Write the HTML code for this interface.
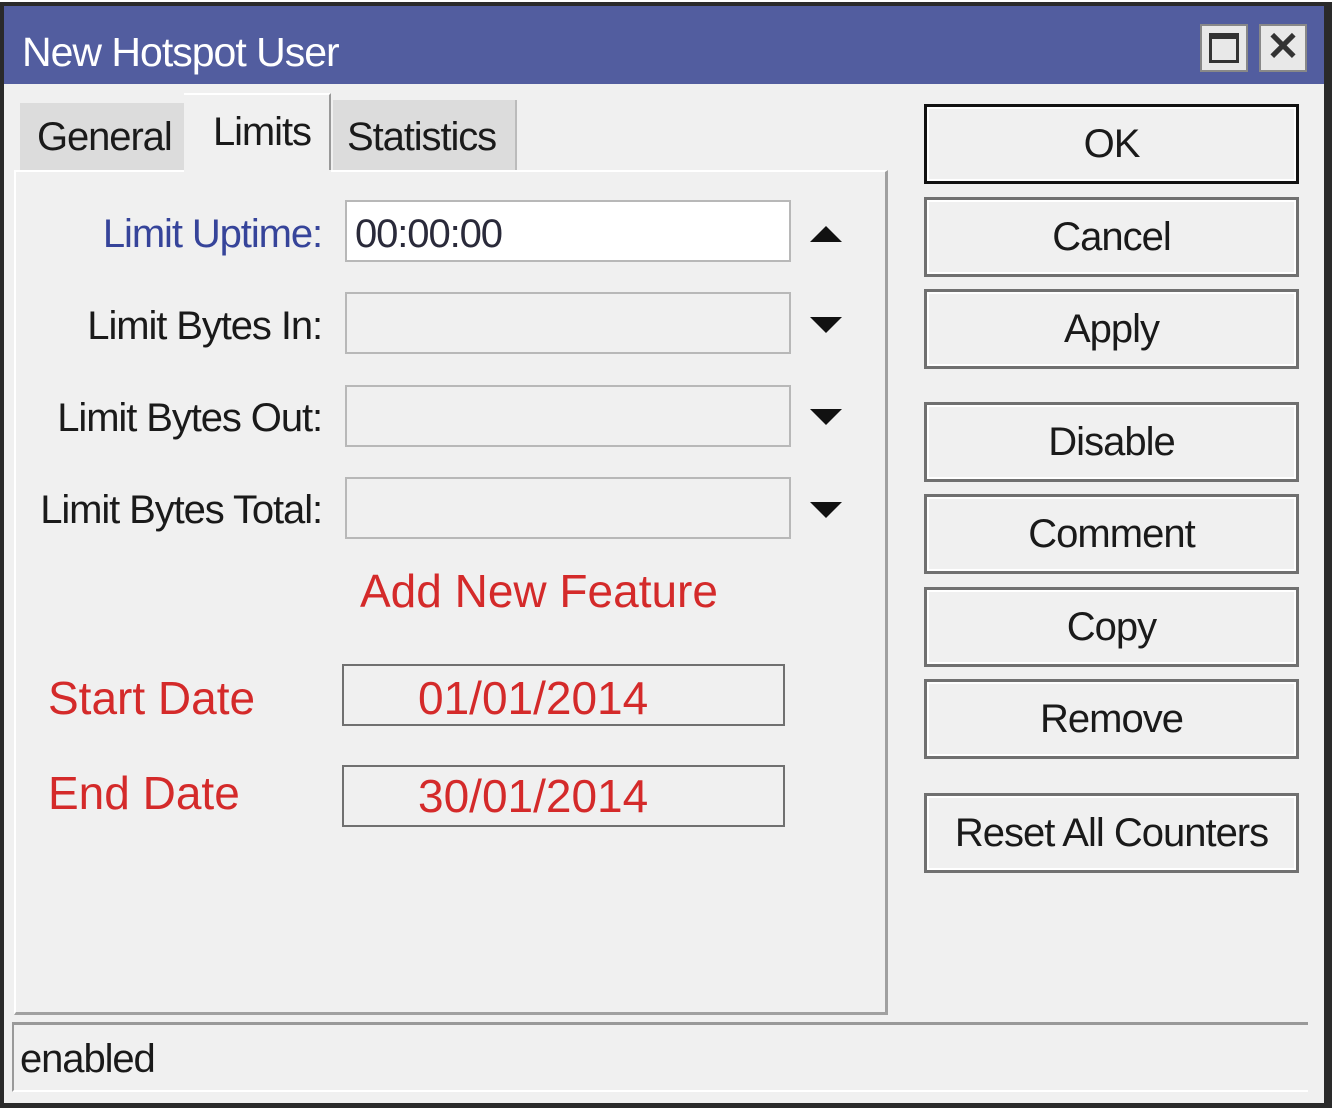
<!DOCTYPE html>
<html><head><meta charset="utf-8"><style>
*{margin:0;padding:0;box-sizing:border-box}
body{width:1332px;height:1108px;background:#fff;position:relative;overflow:hidden;font-family:"Liberation Sans",sans-serif}
.a{position:absolute}
.t{position:absolute;white-space:nowrap;font-size:40px;color:#1a1a1a;letter-spacing:-1.1px;line-height:1}
.lbl{right:1010px;text-align:right}
.inp{position:absolute;left:345px;width:446px;height:62px;border:2px solid #b8b8b8;background:#f0f0f0}
.btn{position:absolute;left:924px;width:375px;height:80px;border:3px solid #707070;background:#f0f0f0;font-size:40px;letter-spacing:-1px;color:#1a1a1a;text-align:center;line-height:74px;box-shadow:inset 0 0 0 2px #fff}
.red{position:absolute;color:#d42a2a;font-size:46px;white-space:nowrap;line-height:1}
.dbox{position:absolute;left:342px;width:443px;height:62px;border:2px solid #707070;background:#f0f0f0}
.tri{position:absolute;left:810px;width:0;height:0;border-left:16px solid transparent;border-right:16px solid transparent}
</style></head><body>
<div class="a" style="left:0;top:2px;width:1332px;height:1106px;background:#2a2a2a"></div>
<div class="a" style="left:4px;top:6px;width:1320px;height:1097px;background:#f0f0f0"></div>
<div class="a" style="left:4px;top:6px;width:1320px;height:78px;background:#525d9f"></div>
<div class="t" style="left:22px;top:32px;color:#fff;font-size:41px;letter-spacing:-1px">New Hotspot User</div>
<div class="a" style="left:1200px;top:24px;width:48px;height:48px;background:#e8e8e8;border:2px solid #888"></div>
<div class="a" style="left:1209px;top:33px;width:30px;height:30px;border:3px solid #333;border-top-width:6px"></div>
<div class="a" style="left:1259px;top:24px;width:48px;height:48px;background:#e8e8e8;border:2px solid #888;font-size:40px;font-weight:bold;color:#333;text-align:center;line-height:42px">✕</div>

<div class="a" style="left:20px;top:103px;width:164px;height:68px;background:#dcdcdc"></div>
<div class="t" style="left:37px;top:117px">General</div>
<div class="a" style="left:184px;top:93px;width:147px;height:80px;background:#f0f0f0;border-top:2px solid #fff;border-right:2px solid #999"></div>
<div class="t" style="left:213px;top:112px">Limits</div>
<div class="a" style="left:333px;top:100px;width:184px;height:70px;background:#dcdcdc;border-right:2px solid #bbb"></div>
<div class="t" style="left:347px;top:117px">Statistics</div>

<div class="a" style="left:14px;top:170px;width:874px;height:845px;border-right:3px solid #a0a0a0;border-bottom:3px solid #a0a0a0;border-top:2px solid #fff;border-left:2px solid #fff"></div>
<div class="a" style="left:184px;top:170px;width:147px;height:3px;background:#f0f0f0"></div>

<div class="t lbl" style="top:214px;color:#36449a">Limit Uptime:</div>
<div class="t lbl" style="top:306px">Limit Bytes In:</div>
<div class="t lbl" style="top:398px">Limit Bytes Out:</div>
<div class="t lbl" style="top:490px">Limit Bytes Total:</div>
<div class="inp" style="top:200px;background:#fff"></div>
<div class="t" style="left:355px;top:214px;color:#2a2a3a">00:00:00</div>
<div class="inp" style="top:292px"></div>
<div class="inp" style="top:385px"></div>
<div class="inp" style="top:477px"></div>
<div class="tri" style="top:226px;border-bottom:16px solid #111"></div>
<div class="tri" style="top:317px;border-top:16px solid #111"></div>
<div class="tri" style="top:409px;border-top:16px solid #111"></div>
<div class="tri" style="top:502px;border-top:16px solid #111"></div>

<div class="red" style="left:360px;top:568px">Add New Feature</div>
<div class="red" style="left:48px;top:675px">Start Date</div>
<div class="dbox" style="top:664px"></div>
<div class="red" style="left:418px;top:675px">01/01/2014</div>
<div class="red" style="left:48px;top:770px">End Date</div>
<div class="dbox" style="top:765px"></div>
<div class="red" style="left:418px;top:773px">30/01/2014</div>

<div class="btn" style="top:104px;border-color:#111">OK</div>
<div class="btn" style="top:197px">Cancel</div>
<div class="btn" style="top:289px">Apply</div>
<div class="btn" style="top:402px">Disable</div>
<div class="btn" style="top:494px">Comment</div>
<div class="btn" style="top:587px">Copy</div>
<div class="btn" style="top:679px">Remove</div>
<div class="btn" style="top:793px">Reset All Counters</div>

<div class="a" style="left:12px;top:1022px;width:1296px;height:70px;border-top:3px solid #999;border-left:2px solid #999;border-bottom:2px solid #fff"></div>
<div class="t" style="left:20px;top:1039px">enabled</div>
</body></html>
